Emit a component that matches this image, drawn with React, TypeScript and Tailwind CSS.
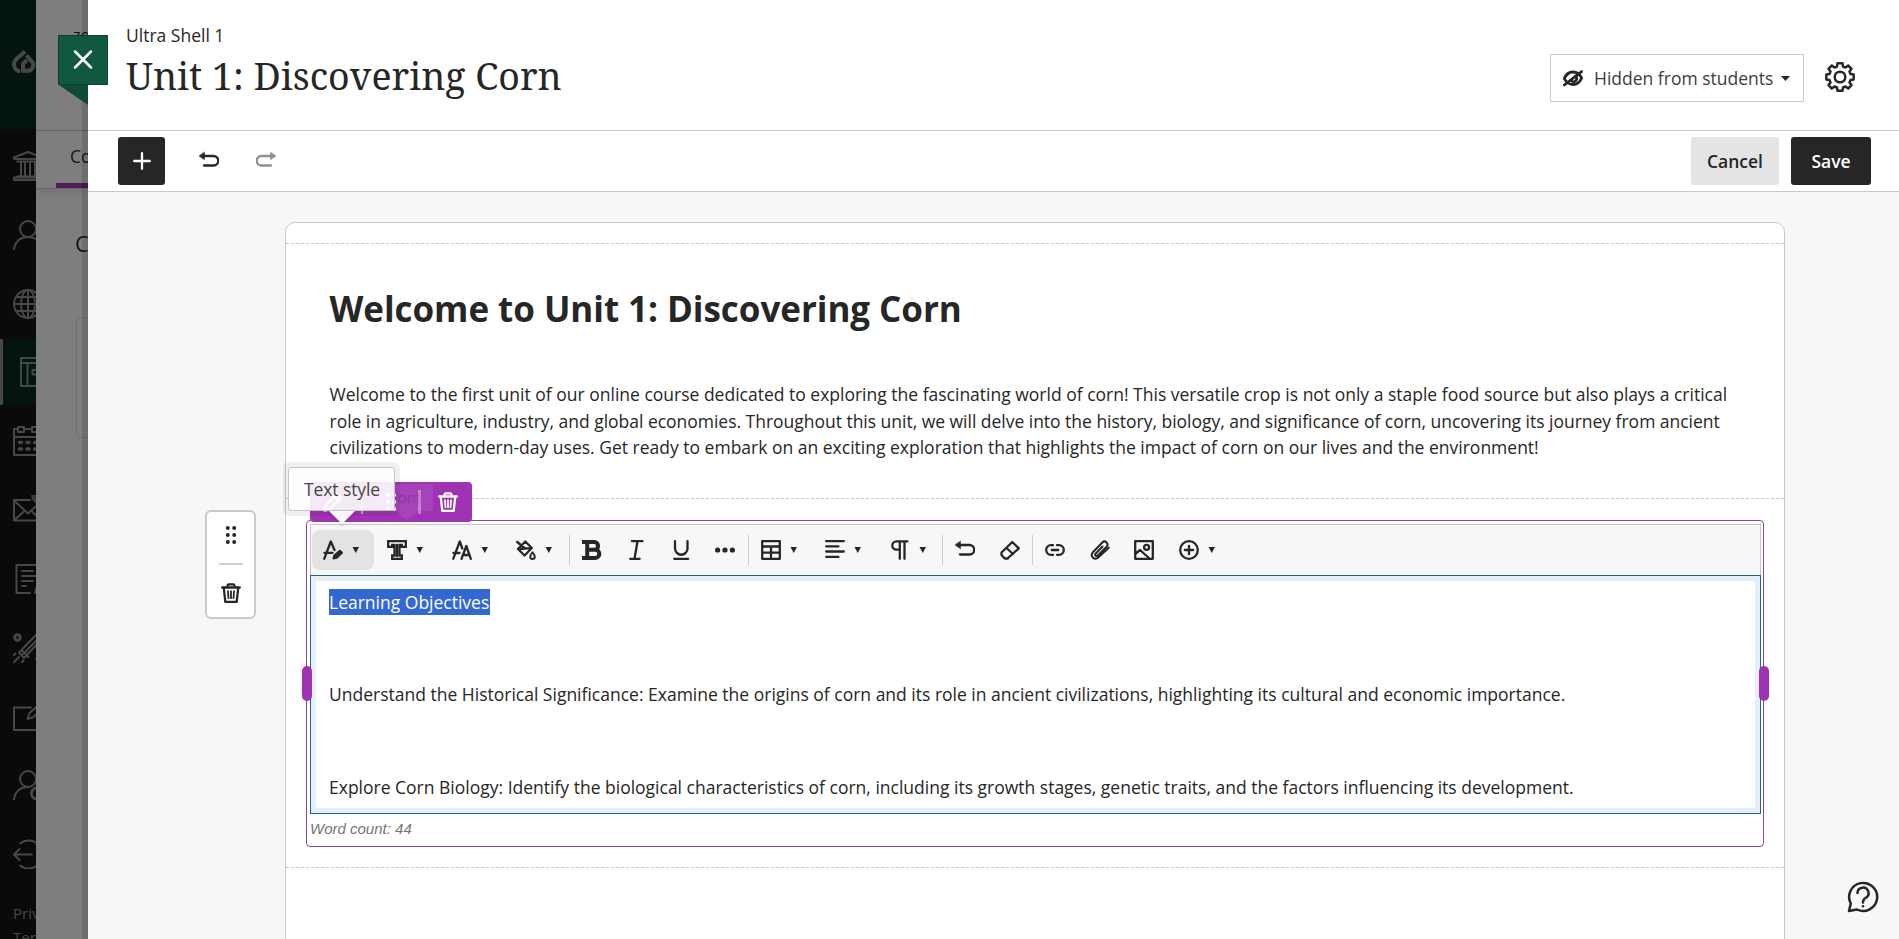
import React from "react";

type IconProps = { className?: string; children: React.ReactNode; box?: string; size?: number; w?: number };

function Svg({ className = "", children, box = "0 0 20 20", size = 20, w = 2.3 }: IconProps) {
  return (
    <svg className={"shrink-0 " + className} width={size} height={size} viewBox={box} fill="none" stroke="currentColor" strokeWidth={w} strokeLinecap="round" strokeLinejoin="round">
      {children}
    </svg>
  );
}

const undoShape = (
  <>
    <path d="M3 5h11.500a4.500 4.500 0 0 1 0 9.500H5" />
    <path d="M5.500 1.300v7.400L0 5z" fill="currentColor" strokeWidth="0.500" />
  </>
);

const trashShape = (
  <>
    <path d="M1.200 4.500h17.600M6.500 4V2.500L7.500 1.300h5l1 1.200V4" />
    <path d="M2.800 5l1.500 13.800h11.400l1.500-13.800" />
    <path d="M7 8.200l.5 7M10 8.200v7M13 8.200l-.5 7" strokeWidth="1.800" />
  </>
);

const tools = {
  style: (
    <>
      <path d="M1.200 18.800L7.800 1.500l3.700 8.500M1.500 12.800h8" />
      <path d="M10.500 18.500l.8-3 5.500-4.700 2.200 2-5.300 4.900z" fill="currentColor" strokeWidth="2" />
    </>
  ),
  font: <path d="M1.200 1.200h17.600v5.600h-4V5h-2.300v10.500h2.300v3.300H5.200v-3.300h2.300V5H5.200v1.800h-4zM10 5v11" strokeLinejoin="miter" />,
  size: (
    <>
      <path d="M1.200 18.800L7.800 1.500l2.500 7M1.500 13h6" />
      <path d="M9.500 18.800L14.300 6 18.800 18.800M11 15h6.500" />
    </>
  ),
  fill: (
    <>
      <path d="M9.300 1.500L15.800 8l-7.300 7.500L2 9zM1.200 2l7.300 6M4 9l10-.8" />
      <path d="M16.500 12.300c1.500 2 2.300 3.300 2.300 4.400a2.300 2.300 0 0 1-4.600 0c0-1.100.8-2.400 2.300-4.400z" strokeWidth="1.900" />
    </>
  ),
  bold: <path d="M0 2.100h13a3.900 3.900 0 0 1 0 7.600H7M13 9.700a4.100 4.100 0 0 1 .5 8.200H0M5.200 2v16" strokeWidth="4" strokeLinecap="butt" />,
  italic: <path d="M6 1.200h10.500M4.200 18.800h9.500M11.500 1.200l-3 17.600" />,
  underline: <path d="M4 1.200v7.300a6.200 6.200 0 0 0 12.500 0V1.200M3.200 18.800h14" />,
  dots: (
    <g fill="currentColor" stroke="none">
      <circle cx="2.600" cy="10" r="2.600" />
      <circle cx="10" cy="10" r="2.600" />
      <circle cx="17.400" cy="10" r="2.600" />
    </g>
  ),
  table: <path d="M1.200 1.200h17.600v17.600H1.200zM1.200 6.500h17.600M1.200 12.700h17.600M10 6.500v12.300" />,
  align: <path d="M1.200 1.200h17.600M1.200 6.300h12.300M1.200 11.500h17.600M1.200 16.800h12.300" />,
  pilcrow: <path d="M17.500 1.300H6.500a4.200 4.200 0 0 0 0 8.400h3.300M9.800 1.300v17.500M14.500 1.300v17.500" />,
  undo: undoShape,
  eraser: <path d="M1.500 12.500L12.300 2l6.500 6.300L7.500 18.500H4.800L1.500 15zM6.500 8l6.500 6M4.800 18.500h3.200" />,
  link: <path d="M8 5.200H6a4.800 4.800 0 0 0 0 9.600h2M12 5.200h2a4.800 4.800 0 0 1 0 9.600h-2M6.800 10h6.400" />,
  clip: <path d="M18.800 7.800L8.200 17.600a3.700 3.700 0 0 1-5.700-.4 4 4 0 0 1 .4-5L12.300 2.500a3 3 0 0 1 4.300 4.200l-9 9a1.300 1.300 0 0 1-2-1.900L12.500 6.500" strokeWidth="2" />,
  image: (
    <>
      <path d="M1.200 1.200h17.600v17.600H1.200zM1.500 13.800L6 10l9.500 8.500" />
      <circle cx="12.600" cy="7.300" r="2.500" />
    </>
  ),
  plus: (
    <>
      <circle cx="10" cy="10" r="8.800" />
      <path d="M10 5.800v8.400M5.800 10h8.400" />
    </>
  ),
};

function Tool({ icon, width, menu, active }: { icon: keyof typeof tools; width: string; menu?: boolean; active?: boolean }) {
  return (
    <div className={"relative flex h-[40px] items-center pl-[12px] " + width}>
      {active && <div className="absolute inset-y-0 left-px right-px rounded-[8px] bg-[#e3e3e3]" />}
      <Svg className="relative">{tools[icon]}</Svg>
      {menu && (
        <svg className="relative -mt-[1px] ml-[9px] shrink-0" width="8" height="6" viewBox="0 0 8 6">
          <path d="M.5 0h6.500L3.750 6z" fill="currentColor" />
        </svg>
      )}
    </div>
  );
}

const Sep = () => <div className="h-[30px] w-px bg-[#cdcdcd]" />;

const nav: { id: string; active?: boolean; icon: React.ReactNode }[] = [
  {
    id: "institution",
    icon: <path d="M1 8V6.500L15 1l14 5.500V8zM4 10.500h22M8 11v14M12 11v14M17 11v14M22 11v14M4 25.500h22M1 29h28M1 29v-2.500h28" />,
  },
  {
    id: "profile",
    icon: (
      <>
        <circle cx="15" cy="9" r="8" />
        <path d="M1 29.500C2 21 8 17 15 17s13 4 14 12.500" />
      </>
    ),
  },
  {
    id: "activity",
    icon: (
      <>
        <circle cx="15" cy="15" r="14" />
        <ellipse cx="15" cy="15" rx="7" ry="14" />
        <path d="M15 1v28M1 15h28M3 8h24M3 22h24" />
      </>
    ),
  },
  { id: "courses", active: true, icon: <path d="M1 1h28v28H1zM1 6h28M7.500 6v23M29 13H12.500v4.500H29" /> },
  {
    id: "calendar",
    icon: (
      <>
        <path d="M5 3H1v26h28V3h-4M12 3h6M1 11h28M5 1h6v5H5zM19 1h6v5h-6z" />
        <path d="M6.500 16.500h2M14 16.500h2M21.500 16.500h2M6.500 23h2M14 23h2M21.500 23h2" strokeWidth="3.500" />
      </>
    ),
  },
  {
    id: "messages",
    icon: (
      <>
        <path d="M17 5H1v20.500h28V7M1 5.500l14 13 14-13M1 25.500l11-10M29 25.500l-11-10" />
        <circle cx="28" cy="0" r="10" fill="#3a3a3a" stroke="none" />
      </>
    ),
  },
  { id: "grades", icon: <path d="M17 29H3.500V1H28v16M9 7h11M9 12h14M9 17h11M9 22h4M22 29l2-7 6-4" /> },
  {
    id: "tools",
    icon: (
      <>
        <path d="M6 19.500L23 2l5 5-17 18zM8.500 17l7 7M10 21L28 3M1 29l5-5M9 29l1.500-1.500M1 22l1.500-1.500M23 26h4" />
        <circle cx="4.500" cy="4.500" r="2.800" strokeDasharray="2 1" strokeWidth="3" />
      </>
    ),
  },
  { id: "edit", icon: <path d="M18 6.500H1V29h28V16M14.500 18l2-6L27 3l3 3-9.500 10z" /> },
  {
    id: "admin",
    icon: (
      <>
        <circle cx="15" cy="9" r="8" />
        <path d="M1 29.500C2 21 8 17 15 17" />
        <circle cx="24" cy="23.500" r="5.500" strokeDasharray="3 1.500" strokeWidth="3" />
      </>
    ),
  },
  { id: "signout", icon: <path d="M19 15.500H1M6.500 10L1 15.500 6.500 21M7 4.500a14 14 0 1 1 0 22" /> },
];

function Sidebar() {
  return (
    <div className="h-full w-[36px] shrink-0 overflow-hidden bg-[#0a0a0a] text-[#474747]">
      <div className="h-[129px] bg-[#04150f] pl-[11px] pt-[49px]">
        <svg width="26" height="26" viewBox="0 0 26 26" fill="none" stroke="currentColor" strokeWidth="4">
          <path d="M14 2.500L6 9.500C1.500 13.500 2 20.500 9 22.500" />
          <path d="M15.500 6.500l4.500 5a5.800 5.800 0 0 1-4.200 10.300H12V15l4-4" />
        </svg>
      </div>
      <div className="pt-[4px]">
        {nav.map((n) => (
          <div key={n.id} className={"mb-[2.800px] flex h-[66px] items-center " + (n.active ? "border-l-[3px] border-[#474747] bg-[#04150f] pl-[17px]" : "pl-[13px]")}>
            <Svg size={30} box="0 0 30 30" w={2}>{n.icon}</Svg>
          </div>
        ))}
      </div>
      <div className="pt-[11px] text-[15px] leading-[24px]">
        <div className="pl-[13px] whitespace-nowrap">Privacy</div>
        <div className="pl-[13px] whitespace-nowrap">Terms</div>
      </div>
    </div>
  );
}

function CoursePeek() {
  return (
    <div className="relative h-full w-[52px] shrink-0 overflow-hidden bg-[#7e7e7e] text-[#151515]">
      <div className="h-[131px] border-b border-[#656565] pl-[37px] pt-[23px] text-[16px] leading-[24px]">zo</div>
      <div className="flex h-[58px] flex-col justify-between border-b border-[#6a6a6a] shadow-[0_3px_8px_rgba(0,0,0,0.1)]">
        <div className="pl-[34px] pt-[12px] text-[17.5px] leading-[27px]">Content</div>
        <div className="ml-[20px] h-[5px] bg-[#511a5a]" />
      </div>
      <div className="pl-[39px] pt-[39px] text-[22px] leading-[30px]">Course</div>
      <div className="ml-[40px] mt-[59px] h-[121px] w-[80px] rounded-[5px] border border-[#6f6f6f]" />
      <div className="absolute inset-y-0 right-0 w-[6px] bg-black/12" />
    </div>
  );
}

function Header() {
  return (
    <div className="flex h-[131px] shrink-0 justify-between border-b border-[#c9c9c9] bg-white pl-[38px] pr-[44px]">
      <div className="pt-[23px]">
        <div className="text-[17.5px] leading-[25px]">Ultra Shell 1</div>
        <h1 className="mt-[3px] whitespace-nowrap font-['Noto_Serif','DejaVu_Serif_Condensed','DejaVu_Serif',serif] text-[37.5px] leading-[50px]">Unit 1: Discovering Corn</h1>
      </div>
      <div className="flex pt-[54px]">
        <div className="mr-[21px] flex h-[48px] w-[254px] items-center border border-[#c9c9c9] pl-[12px]">
          <Svg w={2.8}>
            <path d="M1.300 10.500C3 6.500 6 4 10 4s7 2.500 8.700 6c-1.700 4-4.700 6.500-8.700 6.500s-7-2.500-8.700-6zM1.300 17L18.700 3.500" />
            <path d="M12.500 8a3.200 3.200 0 0 1-4 5" />
          </Svg>
          <span className="ml-[11px] whitespace-nowrap text-[17.5px] leading-[24px] text-[#3d3d3d]">Hidden from students</span>
          <svg className="ml-[8px]" width="9" height="5" viewBox="0 0 9 5"><path d="M0 0h9L4.500 5z" fill="currentColor" /></svg>
        </div>
        <Svg size={30} box="0 0 30 30" w={2.500} className="mt-[8px]">
          <path d="M12 4.500 12.500 1.300h5L18 4.500 20.500 5.500 23.200 3.500 26.500 6.800 24.500 9.500 25.500 12 28.700 12.500v5L25.500 18 24.500 20.500 26.500 23.200 23.200 26.500 20.500 24.500 18 25.500 17.500 28.700h-5L12 25.500 9.500 24.500 6.800 26.500 3.500 23.200 5.500 20.500 4.500 18 1.300 17.500v-5L4.500 12 5.500 9.500 3.500 6.800 6.800 3.500 9.500 5.500z" />
          <circle cx="15" cy="15" r="5.300" />
        </Svg>
      </div>
    </div>
  );
}

function ActionBar() {
  return (
    <div className="flex h-[61px] shrink-0 items-center border-b border-[#c9c9c9] bg-white pl-[30px] pr-[28px]">
      <div className="flex h-[48px] w-[47px] items-center justify-center rounded-[3px] bg-[#262626] text-white">
        <Svg size={18} box="0 0 18 18" w={2.3}><path d="M9 1.200v15.600M1.200 9h15.600" /></Svg>
      </div>
      <Svg className="ml-[34px]">{undoShape}</Svg>
      <Svg className="ml-[37px] -scale-x-100 text-[#8f8f8f]">{undoShape}</Svg>
      <div className="ml-auto flex gap-[12px] text-[17.5px] font-semibold">
        <div className="flex h-[48px] w-[88px] items-center justify-center rounded-[3px] bg-[#e4e4e4]">Cancel</div>
        <div className="flex h-[48px] w-[80px] items-center justify-center rounded-[3px] bg-[#262626] text-white">Save</div>
      </div>
    </div>
  );
}

function BlockHandle() {
  return (
    <div className="mt-[318px] flex h-[109px] w-[51px] shrink-0 flex-col items-center rounded-[6px] border-2 border-[#cacaca] bg-white">
      <svg className="mt-[13px]" width="12" height="20" viewBox="0 0 12 20" fill="currentColor">
        <circle cx="2.800" cy="3" r="2" /><circle cx="9.200" cy="3" r="2" />
        <circle cx="2.800" cy="10" r="2" /><circle cx="9.200" cy="10" r="2" />
        <circle cx="2.800" cy="17" r="2" /><circle cx="9.200" cy="17" r="2" />
      </svg>
      <div className="mt-[18px] h-[2px] w-[24px] bg-[#cfcfcf]" />
      <Svg className="mt-[18px]">{trashShape}</Svg>
    </div>
  );
}

function BlockBar() {
  return (
    <div className="absolute left-[3px] top-[-39px] h-[40px] w-[162px] rounded-[4px] bg-[#a033b3] text-white">
      <Svg className="absolute left-[13px] top-[10px]"><path d="M1.500 18.500l1-5L14 2l4 4L6.500 17.500zM11.500 4.500l4 4" /></Svg>
      <div className="absolute left-[51px] top-[8px] h-[24px] w-[2px] bg-white/50" />
      <svg className="absolute left-[75px] top-[10px]" width="12" height="20" viewBox="0 0 12 20" fill="currentColor">
        <circle cx="2.800" cy="3" r="2" /><circle cx="9.200" cy="3" r="2" />
        <circle cx="2.800" cy="10" r="2" /><circle cx="9.200" cy="10" r="2" />
        <circle cx="2.800" cy="17" r="2" /><circle cx="9.200" cy="17" r="2" />
      </svg>
      <div className="absolute left-[60px] top-[2px] h-[27px] w-[63px] rounded-[3px] bg-white/8 pl-[20px] text-[15px] leading-[27px] text-[#3b1042]/25">Font</div>
      <svg className="absolute left-[85px] top-[29px]" width="24" height="9" viewBox="0 0 24 9"><path d="M0 0h24L12 9z" fill="#ffffff" fillOpacity="0.08" /></svg>
      <div className="absolute left-[108px] top-[8px] h-[24px] w-[3px] bg-white/35" />
      <Svg className="absolute left-[128px] top-[10px]">{trashShape}</Svg>
    </div>
  );
}

function Tooltip() {
  return (
    <div className="absolute left-[-24px] top-[-59px] h-[54px] w-[117px] rounded-[6px] bg-black/6 p-[5px]">
      <div className="flex h-[44px] w-[107px] items-center rounded-[3px] border border-[#c4c4c4] bg-white/90 pl-[15px] text-[17.5px] tracking-[-0.100px] text-[#444]">Text style</div>
      <svg className="absolute left-[41px] top-[49px]" width="36" height="17" viewBox="0 0 36 17">
        <path d="M2 1h32L18 17z" fill="#000" fillOpacity="0.060" />
        <path d="M5 0h26L18 13z" fill="#fbf5fc" />
      </svg>
    </div>
  );
}

function Editor() {
  return (
    <div className="relative ml-[20px] mt-[21px] h-[327px] w-[1458px] rounded-[4px] border border-[#8b4599] pl-[3px] pr-[2px] pt-[3px]">
      <BlockBar />
      <div className="flex h-[51px] items-center border-x border-t border-[#c9c9c9] bg-[#f7f7f7]">
        <Tool icon="style" width="w-[64px]" menu active />
        <Tool icon="font" width="w-[65px]" menu />
        <Tool icon="size" width="w-[64px]" menu />
        <Tool icon="fill" width="w-[65px]" menu />
        <Sep />
        <Tool icon="bold" width="w-[44px]" />
        <Tool icon="italic" width="w-[45px]" />
        <Tool icon="underline" width="w-[44px]" />
        <Tool icon="dots" width="w-[45px]" />
        <Sep />
        <Tool icon="table" width="w-[64px]" menu />
        <Tool icon="align" width="w-[65px]" menu />
        <Tool icon="pilcrow" width="w-[64px]" menu />
        <Sep />
        <Tool icon="undo" width="w-[45px]" />
        <Tool icon="eraser" width="w-[44px]" />
        <Sep />
        <Tool icon="link" width="w-[45px]" />
        <Tool icon="clip" width="w-[44px]" />
        <Tool icon="image" width="w-[45px]" />
        <Tool icon="plus" width="w-[64px]" menu />
      </div>
      <div className="h-[239px] border border-[#1c668f]">
        <div className="h-full border-[5px] border-[#e4eff7] pl-[13px] pt-[8px] text-[17.5px] leading-[26px]">
          <p><span className="inline-block w-[161px] whitespace-nowrap bg-[#3367d1] text-white">Learning Objectives</span></p>
          <p className="mt-[66px] whitespace-nowrap">Understand the Historical Significance: Examine the origins of corn and its role in ancient civilizations, highlighting its cultural and economic importance.</p>
          <p className="mt-[67px] whitespace-nowrap">Explore Corn Biology: Identify the biological characteristics of corn, including its growth stages, genetic traits, and the factors influencing its development.</p>
        </div>
      </div>
      <div className="pt-[4px] font-['Liberation_Sans',sans-serif] text-[15px] leading-[22px] italic text-[#757575]">Word count: 44</div>
      <div className="absolute left-[-5px] top-[145px] h-[35px] w-[10px] rounded-full bg-[#a033b3]" />
      <div className="absolute right-[-6px] top-[145px] h-[35px] w-[10px] rounded-full bg-[#a033b3]" />
      <Tooltip />
    </div>
  );
}

export default function App() {
  return (
    <div className="flex h-[939px] w-[1899px] overflow-hidden bg-white font-['Open_Sans',sans-serif] text-[#262626]">
      <Sidebar />
      <CoursePeek />
      <div className="relative flex h-full flex-1 flex-col bg-[#f7f7f7]">
        <Header />
        <ActionBar />
        <div className="flex min-h-0 flex-1 pl-[117px]">
          <BlockHandle />
          <div className="ml-[29px] mt-[30px] h-[800px] w-[1500px] shrink-0 rounded-[10px] border border-[#c9c9c9] bg-white">
            <div className="mt-[20px] h-[255px] border-t border-dashed border-[#c9c9c9] pl-[43.5px]">
              <h2 className="mt-[40px] whitespace-nowrap text-[35px] font-bold leading-[50px] tracking-[-0.050px]">Welcome to Unit 1: Discovering Corn</h2>
              <div className="mt-[47px] whitespace-nowrap text-[17.5px] leading-[26.500px]">
                <div>Welcome to the first unit of our online course dedicated to exploring the fascinating world of corn! This versatile crop is not only a staple food source but also plays a critical</div>
                <div className="tracking-[-0.020px]">role in agriculture, industry, and global economies. Throughout this unit, we will delve into the history, biology, and significance of corn, uncovering its journey from ancient</div>
                <div>civilizations to modern-day uses. Get ready to embark on an exciting exploration that highlights the impact of corn on our lives and the environment!</div>
              </div>
            </div>
            <div className="h-[370px] border-y border-dashed border-[#c9c9c9]">
              <Editor />
            </div>
          </div>
        </div>
        <svg className="absolute left-[-30px] top-[35px]" width="50" height="70" viewBox="0 0 50 70">
          <path d="M1 50h29v20z" fill="#0f4a35" />
          <path d="M.5.500h49v49H.5z" fill="#12573f" stroke="#0c3f2d" />
          <path d="M17 16.500l16 16M33 16.500l-16 16" stroke="#fff" strokeWidth="2.500" strokeLinecap="round" />
        </svg>
        <Svg size={32} box="0 0 32 32" w={2.500} className="absolute left-[1759px] top-[881px]">
          <path d="M2 30l1.800-7.500A14 14 0 1 1 10 28.500z" />
          <path d="M10.500 12a5.500 5.500 0 1 1 8 5c-2 1-2.500 2-2.500 4.500" />
          <path d="M16 25.200v.1" />
        </Svg>
      </div>
    </div>
  );
}
